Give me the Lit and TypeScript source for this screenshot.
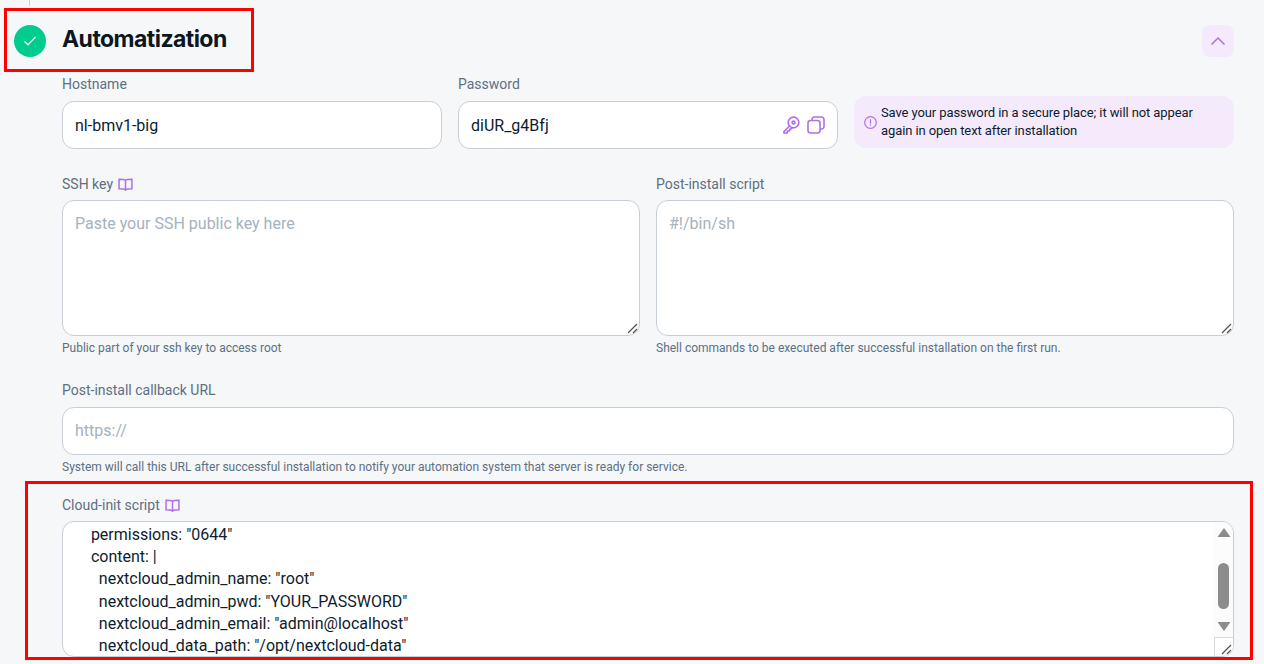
import { LitElement, html, css } from "lit";
import { customElement } from "lit/decorators.js";

const book = html`<svg class="book" viewBox="0 0 14 12" width="15" height="13" fill="none" stroke="#b06fe8" stroke-width="1.4"><path d="M7 2.200C6 1.300 4.400 1 1 1v9c3.400 0 5 .3 6 1.200 1-.9 2.600-1.200 6-1.200V1C9.600 1 8 1.300 7 2.200zM7 2.200v9"/></svg>`;

const grip = html`<svg class="grip" width="11" height="11" viewBox="0 0 11 11" fill="none" stroke="#555" stroke-width="1.300"><path d="M1 10l9-9M6 10l4-4"/></svg>`;

@customElement("app-root")
export class AppRoot extends LitElement {
  static styles = css`
    :host { display: block; position: relative; width: 1264px; height: 664px; overflow: hidden; background: #f6f7f9; font-family: Roboto, sans-serif; color: #0d1c2e; }
    .page { display: flex; flex-direction: column; padding: 25px 30px 0 14px; }
    .head { display: flex; align-items: center; height: 32px; }
    .check { width: 32px; height: 32px; border-radius: 50%; background: #00cc90; display: flex; align-items: center; justify-content: center; }
    h2 { margin: 0 0 0 16px; padding-bottom: 5px; font: 700 23px/32px Inter, sans-serif; letter-spacing: -0.55px; flex: 1; color: #0b1622; }
    .toggle { width: 32px; height: 32px; border-radius: 8px; background: #f4eafb; display: flex; align-items: center; justify-content: center; }
    .body { display: flex; flex-direction: column; padding-left: 48px; }
    .row3 { display: grid; grid-template-columns: repeat(3, 380px); gap: 16px; margin-top: 18px; align-items: start; }
    .row2 { display: grid; grid-template-columns: repeat(2, 578px); gap: 16px; margin-top: 26px; }
    .full { margin-top: 26px; }
    .last { margin-top: 22px; }
    label { display: flex; align-items: center; gap: 5px; height: 18px; margin-bottom: 8px; font-size: 14px; line-height: 18px; color: #5c7083; }
    .row2 label, .last label { margin-bottom: 7px; }
    .book { margin-top: 1px; }
    .input { box-sizing: border-box; height: 48px; background: #fff; border: 1px solid #c8ced6; border-radius: 12px; padding: 0 12px; display: flex; align-items: center; font-size: 16px; color: #0d1c2e; }
    .input.ph { color: #a6b2bc; padding-bottom: 1px; }
    .input span { flex: 1; }
    .icons { display: flex; gap: 7px; align-items: center; }
    .notice { box-sizing: border-box; height: 52px; margin-top: 21px; border-radius: 12px; background: #f4eafb; display: flex; align-items: center; gap: 4px; padding: 0 10px; font-size: 13px; line-height: 18px; letter-spacing: -0.1px; color: #0d1c2e; }
    .notice svg { flex: none; }
    .area { position: relative; height: 136px; }
    textarea { display: block; box-sizing: border-box; width: 100%; height: 136px; background: #fff; border: 1px solid #c8ced6; border-radius: 12px; padding: 12px; font: 16px/22px Roboto, sans-serif; outline: none; resize: none; color: #0d1c2e; }
    textarea::placeholder { color: #a6b2bc; opacity: 1; }
    .grip { position: absolute; right: 2px; bottom: 2px; }
    .hint { margin-top: 5px; font-size: 12px; line-height: 14px; color: #5c7083; }
    .cloud { position: relative; box-sizing: border-box; height: 136px; background: #fff; border: 1px solid #c8ced6; border-radius: 12px; overflow: hidden; padding: 2px 0 0 12px; font-size: 16px; line-height: 22.200px; color: #0d1c2e; white-space: pre; }
    .sb { position: absolute; right: 0; top: 0; bottom: 0; width: 19px; background: #fcfcfc; }
    .corner { position: absolute; right: 0; bottom: 0; width: 19px; height: 19px; box-sizing: border-box; background: #fff; border: 1px solid #d9d9d9; border-right: 0; border-bottom: 0; }
    .corner .grip { right: 1px; bottom: 1px; }
    .thumb { position: absolute; left: 4px; top: 41px; width: 11px; height: 46px; border-radius: 6px; background: #8c8c8c; }
    .sb svg.up { position: absolute; left: 3px; top: 6px; }
    .sb svg.down { position: absolute; left: 3px; top: 100px; }
    .dash { position: absolute; left: 29px; top: 0; height: 6px; border-left: 1px dashed #c8ced6; }
    .mark { position: absolute; box-sizing: border-box; border: 3px solid #f00; pointer-events: none; }
    .m1 { left: 4px; top: 8px; width: 250px; height: 64px; }
    .m2 { left: 25px; top: 481px; width: 1228px; height: 179px; }
  `;

  render() {
    return html`
      <div class="dash"></div>
      <div class="page">
        <div class="head">
          <div class="check"><svg width="14" height="12" viewBox="0 0 14 12" fill="none" stroke="#fff" stroke-width="1.2"><path d="M1.500 6.500l3.500 3.300 7.500-7.800"/></svg></div>
          <h2>Automatization</h2>
          <div class="toggle"><svg width="16" height="10" viewBox="0 0 16 10" fill="none" stroke="#b06fe8" stroke-width="1.500"><path d="M1.500 8.500L8 2l6.500 6.500"/></svg></div>
        </div>
        <div class="body">
          <div class="row3">
            <div><label>Hostname</label><div class="input"><span>nl-bmv1-big</span></div></div>
            <div><label>Password</label><div class="input"><span>diUR_g4Bfj</span>
              <div class="icons">
                <svg width="18" height="18" viewBox="0 0 18 18" fill="none" stroke="#b06fe8" stroke-width="1.700"><circle cx="11.500" cy="6.500" r="5.300"/><circle cx="11.500" cy="6.500" r="1.400"/><path d="M7.500 10L2 15.500V17h3l.5-2h2l.5-2h1l1-1.200"/></svg>
                <svg width="18" height="18" viewBox="0 0 18 18" fill="none" stroke="#b06fe8" stroke-width="1.600"><rect x="1" y="4.500" width="12" height="12.500" rx="2.500"/><path d="M5 4.500V3.500A2.500 2.500 0 0 1 7.500 1h7A2.500 2.500 0 0 1 17 3.500v7a2.500 2.500 0 0 1-2.500 2.500H13"/></svg>
              </div></div></div>
            <div class="notice">
              <svg width="13" height="13" viewBox="0 0 13 13" fill="none" stroke="#b06fe8" stroke-width="1.200"><circle cx="6.500" cy="6.500" r="5.800"/><path d="M6.500 3.200v4.200M6.500 8.600v1.200"/></svg>
              <div>Save your password in a secure place; it will not appear again in open text after installation</div>
            </div>
          </div>
          <div class="row2">
            <div><label>SSH key ${book}</label><div class="area"><textarea placeholder="Paste your SSH public key here"></textarea>${grip}</div><div class="hint">Public part of your ssh key to access root</div></div>
            <div><label>Post-install script</label><div class="area"><textarea placeholder="#!/bin/sh"></textarea>${grip}</div><div class="hint">Shell commands to be executed after successful installation on the first run.</div></div>
          </div>
          <div class="full"><label>Post-install callback URL</label><div class="input ph"><span>https://</span></div><div class="hint">System will call this URL after successful installation to notify your automation system that server is ready for service.</div></div>
          <div class="last"><label>Cloud-init script ${book}</label>
            <div class="cloud">    permissions: "0644"
    content: |
      nextcloud_admin_name: "root"
      nextcloud_admin_pwd: "YOUR_PASSWORD"
      nextcloud_admin_email: "admin@localhost"
      nextcloud_data_path: "/opt/nextcloud-data"<div class="sb">
                <svg class="up" width="14" height="9" viewBox="0 0 14 9" fill="#8c8c8c"><path d="M7 0l6.500 9H.5z"/></svg>
                <div class="thumb"></div>
                <svg class="down" width="14" height="9" viewBox="0 0 14 9" fill="#8c8c8c"><path d="M7 9L.5 0h13z"/></svg>
                <div class="corner">${grip}</div>
              </div></div>
          </div>
        </div>
      </div>
      <div class="mark m1"></div>
      <div class="mark m2"></div>
    `;
  }
}
